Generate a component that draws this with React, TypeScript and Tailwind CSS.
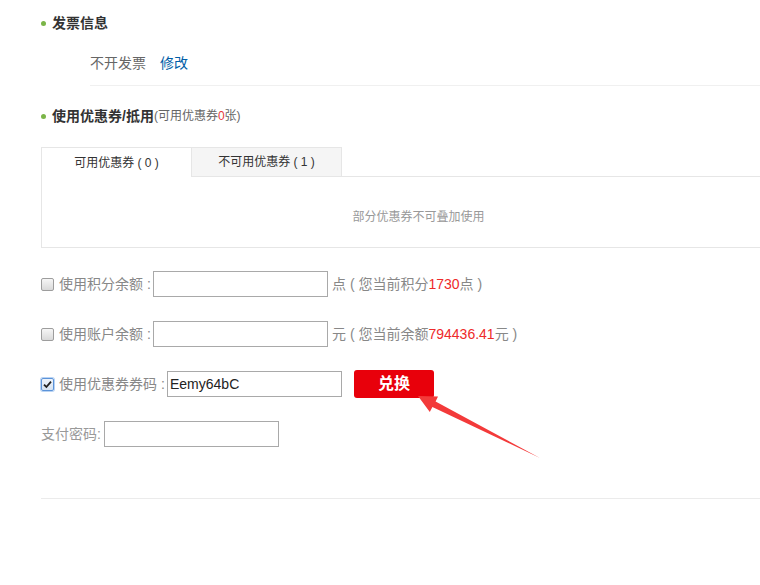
import React from 'react';

const font = { fontFamily: '"Liberation Sans", "Noto Sans CJK SC", sans-serif' };

const Dot = () => <span className="mr-[6px] inline-block h-[5px] w-[5px] rounded-full bg-[#7bb548]" />;

const CheckBox = ({ checked }: { checked?: boolean }) =>
    checked ? (
        <span className="flex h-[13px] w-[13px] items-center justify-center rounded-[2px] border border-[#5b93d9] bg-gradient-to-b from-[#eef4fb] to-[#d7e3f1] shadow-[0_0_0_1px_#b9d3f3]">
            <svg width="9" height="9" viewBox="0 0 9 9">
                <path d="M1 4.6 L3.4 7 L8 1.6" fill="none" stroke="#222" strokeWidth="1.8" />
            </svg>
        </span>
    ) : (
        <span className="h-[13px] w-[13px] rounded-[2px] border border-[#9d9d9d] bg-gradient-to-b from-[#f6f6f6] to-[#d9d9d9]" />
    );

const Input = ({ width, value }: { width: string; value?: string }) => (
    <input
        readOnly
        value={value ?? ''}
        className={`h-[26px] ${width} border border-[#a9a9a9] bg-white px-[2px] text-[14px] text-[#222] outline-none`}
        style={font}
    />
);

export default function App() {
    return (
        <div className="relative h-[585px] w-full overflow-hidden bg-white" style={font}>
            <div className="w-[800px] pl-[41px] pt-[14px]">
                {/* 发票信息 */}
                <div className="flex h-[18px] items-center text-[14px] font-bold leading-[18px] text-[#333]">
                    <Dot />
                    发票信息
                </div>
                <div className="ml-[49px] mt-[19px] h-[24px] text-[14px] leading-[24px] text-[#666]">
                    不开发票<span className="ml-[14px] text-[#005ea7]">修改</span>
                </div>
                <div className="ml-[49px] mt-[10px] h-px bg-[#f0f0f0]" />

                {/* 优惠券 */}
                <div className="mt-[21px] flex h-[18px] items-center leading-[18px]">
                    <Dot />
                    <span className="text-[14px] font-bold text-[#333]">使用优惠券/抵用</span>
                    <span className="text-[12px] text-[#666]">
                        (可用优惠券<span className="text-[#e4393c]">0</span>张)
                    </span>
                </div>

                <div className="mt-[22px] w-[754px] border-b border-l border-[#e6e6e6]">
                    <div className="flex h-[30px] text-[12px] text-[#333]">
                        <div className="flex w-[149px] items-center justify-center border-t border-[#e6e6e6] bg-white">
                            可用优惠券 ( 0 )
                        </div>
                        <div className="flex w-[151px] items-center justify-center border-x border-b border-t border-[#e6e6e6] bg-[#f5f5f5]">
                            不可用优惠券 ( 1 )
                        </div>
                        <div className="flex-1 border-b border-[#e6e6e6]" />
                    </div>
                    <div className="pb-[21px] pt-[31px] text-center text-[12px] leading-[18px] text-[#999]">
                        部分优惠券不可叠加使用
                    </div>
                </div>

                {/* form */}
                <div className="mt-[23px] flex h-[26px] items-center text-[14px] text-[#888]">
                    <CheckBox />
                    <span className="ml-[5px] w-[94px]">使用积分余额 :</span>
                    <Input width="w-[175px]" />
                    <span className="ml-[4px]">
                        点 ( 您当前积分<span className="text-[#ee2a2a]">1730</span>点 )
                    </span>
                </div>
                <div className="mt-[24px] flex h-[26px] items-center text-[14px] text-[#888]">
                    <CheckBox />
                    <span className="ml-[5px] w-[94px]">使用账户余额 :</span>
                    <Input width="w-[175px]" />
                    <span className="ml-[4px]">
                        元 ( 您当前余额<span className="text-[#ee2a2a]">794436.41</span>元 )
                    </span>
                </div>
                <div className="mt-[24px] flex h-[26px] items-center text-[14px] text-[#888]">
                    <CheckBox checked />
                    <span className="ml-[5px] w-[108px]">使用优惠券券码 :</span>
                    <Input width="w-[175px]" value="Eemy64bC" />
                    <button className="ml-[12px] flex h-[28px] w-[80px] items-center justify-center rounded-[3px] bg-[#e8000b] text-[16px] font-bold text-white">
                        兑换
                    </button>
                </div>
                <div className="mt-[24px] flex h-[26px] items-center text-[14px] text-[#999]">
                    <span className="w-[63px]">支付密码:</span>
                    <Input width="w-[175px]" />
                </div>

                <div className="mt-[51px] h-px bg-[#ebebeb]" />
            </div>

            <svg className="pointer-events-none absolute left-0 top-0" width="760" height="585">
                <polygon
                    points="418,396 438,396.5 435.6,401.6 540,458 432.4,407 429.8,412"
                    fill="#f33a3a"
                />
            </svg>
        </div>
    );
}
